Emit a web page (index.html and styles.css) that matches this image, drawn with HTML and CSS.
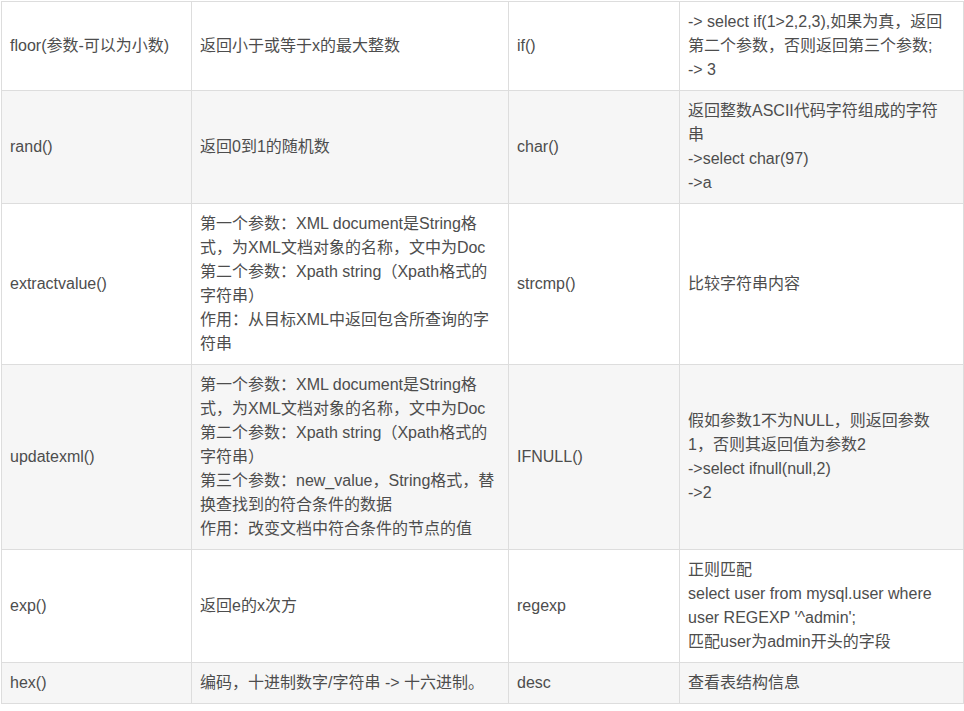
FILE: index.html
```html
<!DOCTYPE html>
<html lang="zh-CN">
<head>
<meta charset="utf-8">
<title>MySQL 函数</title>
<link rel="stylesheet" href="styles.css">
</head>
<body>
<table class="fn-table">
  <colgroup>
    <col class="c1"><col class="c2"><col class="c3"><col class="c4">
  </colgroup>
  <tbody>
    <tr>
      <td>floor(参数-可以为小数)</td>
      <td>返回小于或等于x的最大整数</td>
      <td>if()</td>
      <td class="wide">-&gt; select if(1&gt;2,2,3),如果为真，返回第二个参数，否则返回第三个参数;<br>-&gt; 3</td>
    </tr>
    <tr>
      <td>rand()</td>
      <td>返回0到1的随机数</td>
      <td>char()</td>
      <td class="wide">返回整数ASCII代码字符组成的字符串<br>-&gt;select char(97)<br>-&gt;a</td>
    </tr>
    <tr>
      <td>extractvalue()</td>
      <td>第一个参数：XML document是String格式，为XML文档对象的名称，文中为Doc<br>第二个参数：Xpath string（Xpath格式的字符串）<br>作用：从目标XML中返回包含所查询的字符串</td>
      <td>strcmp()</td>
      <td class="wide">比较字符串内容</td>
    </tr>
    <tr>
      <td>updatexml()</td>
      <td>第一个参数：XML document是String格式，为XML文档对象的名称，文中为Doc<br>第二个参数：Xpath string（Xpath格式的字符串）<br>第三个参数：new_value，String格式，替换查找到的符合条件的数据<br>作用：改变文档中符合条件的节点的值</td>
      <td>IFNULL()</td>
      <td class="wide">假如参数1不为NULL，则返回参数1，否则其返回值为参数2<br>-&gt;select ifnull(null,2)<br>-&gt;2</td>
    </tr>
    <tr>
      <td>exp()</td>
      <td>返回e的x次方</td>
      <td>regexp</td>
      <td class="wide">正则匹配<br>select user from mysql.user where user REGEXP '^admin';<br>匹配user为admin开头的字段</td>
    </tr>
    <tr>
      <td>hex()</td>
      <td>编码，十进制数字/字符串 -&gt; 十六进制。</td>
      <td>desc</td>
      <td class="wide">查看表结构信息</td>
    </tr>
  </tbody>
</table>
</body>
</html>
```

FILE: styles.css
```css
html, body {
  background: #ffffff;
}
body {
  margin: 1px 0 0 1px;
  font-family: "Liberation Sans", Arial, "Noto Sans CJK SC", sans-serif;
  font-size: 16px;
  line-height: 24px;
  color: #4d4d4d;
}
.fn-table {
  border-collapse: collapse;
  table-layout: fixed;
  width: 962px;
}
.fn-table .c1 { width: 190px; }
.fn-table .c2 { width: 317px; }
.fn-table .c3 { width: 171px; }
.fn-table .c4 { width: 284px; }
.fn-table td {
  border: 1px solid #dddddd;
  padding: 8px;
  vertical-align: middle;
  word-wrap: break-word;
}
.fn-table td.wide {
  padding-right: 17px;
}
.fn-table tr:nth-child(2n) {
  background: #f6f6f6;
}
```
